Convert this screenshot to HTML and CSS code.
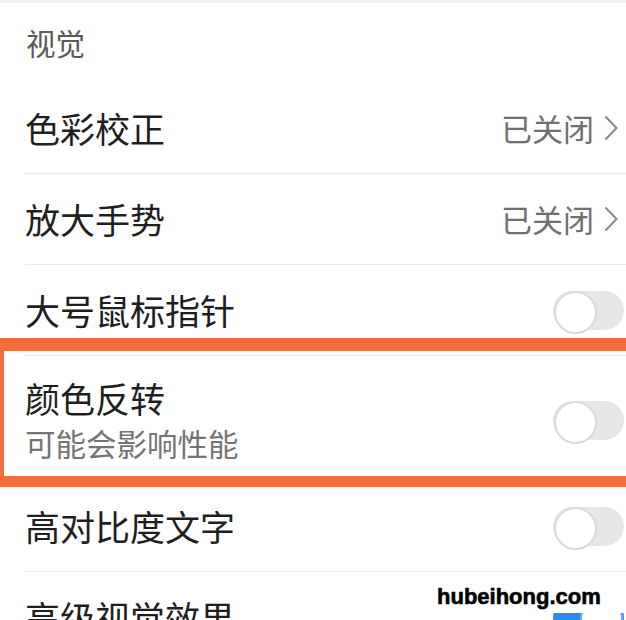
FILE: index.html
```html
<!DOCTYPE html>
<html>

<head>
    <meta charset="utf-8" />
    <title>辅助功能</title>
    <link rel="stylesheet" href="styles.css">
</head>

<body>
    <div class="page">
        <div class="strip"></div>
        <div class="group-title">视觉</div>
        <div class="list">
            <div class="row">
                <span class="label">色彩校正</span>
                <span class="value">已关闭
                    <svg class="chevron" width="14" height="26" viewBox="0 0 14 26">
                        <polyline points="1.5,1.5 12.5,13 1.5,24.5" />
                    </svg>
                </span>
            </div>
            <div class="row">
                <span class="label">放大手势</span>
                <span class="value">已关闭
                    <svg class="chevron" width="14" height="26" viewBox="0 0 14 26">
                        <polyline points="1.5,1.5 12.5,13 1.5,24.5" />
                    </svg>
                </span>
            </div>
            <div class="row">
                <span class="label">大号鼠标指针</span>
                <span class="switch"></span>
            </div>
            <div class="row tall">
                <div class="texts">
                    <span class="label">颜色反转</span>
                    <span class="hint">可能会影响性能</span>
                </div>
                <span class="switch"></span>
            </div>
            <div class="row">
                <span class="label">高对比度文字</span>
                <span class="switch"></span>
            </div>
            <div class="row">
                <span class="label">高级视觉效果</span>
                <span class="switch on"></span>
            </div>
        </div>
        <div class="highlight"></div>
        <div class="watermark">hubeihong.com</div>
    </div>
</body>

</html>
```

FILE: styles.css
```css
* {
    box-sizing: border-box;
}

html,
body {
    margin: 0;
    background-color: #fff;
}

.page {
    position: relative;
    width: 626px;
    height: 620px;
    overflow: hidden;
    font-family: "Noto Sans CJK SC", "Noto Sans", sans-serif;
}

.strip {
    height: 3px;
    background-color: #f1f1f1;
}

.group-title {
    height: 80px;
    padding: 21px 0 0 26px;
    font-size: 29.5px;
    line-height: 36px;
    color: #5a5a5a;
}

.list {
    padding-left: 25px;
}

.row {
    display: flex;
    align-items: center;
    justify-content: space-between;
    height: 91px;
    padding-right: 2px;
    border-bottom: 1px solid #ebebeb;
}

.row.tall {
    height: 125px;
    padding-top: 4px;
}

.label {
    font-size: 35px;
    line-height: 40px;
    color: #1e1e1e;
}

.texts {
    display: flex;
    flex-direction: column;
    gap: 5px;
}

.hint {
    font-size: 30.5px;
    line-height: 40px;
    color: #747474;
}

.value {
    display: flex;
    align-items: center;
    gap: 10px;
    padding-right: 6px;
    font-size: 31px;
    line-height: 40px;
    color: #6f6f6f;
}

.chevron polyline {
    fill: none;
    stroke: #8a8a8a;
    stroke-width: 2;
}

.switch {
    position: relative;
    width: 71px;
    height: 39px;
    border-radius: 20px;
    background-color: #e6e6e6;
}

.switch::after {
    content: "";
    position: absolute;
    left: 1px;
    top: 0;
    width: 39px;
    height: 39px;
    border-radius: 50%;
    border: 2px solid #dadada;
    background-color: #fff;
}

.switch.on {
    background-color: #2a8cec;
}

.switch.on::after {
    left: auto;
    right: 1px;
    border-color: #6fb5f5;
}

.highlight {
    position: absolute;
    left: 0;
    right: -20px;
    top: 338px;
    height: 149px;
    border: solid #f56d3d;
    border-width: 13px 0 11px 4px;
}

.watermark {
    position: absolute;
    left: 430px;
    right: 0;
    top: 583px;
    height: 30px;
    padding: 0 7px;
    background-color: #fff;
    font-family: "Liberation Sans", Arial, sans-serif;
    font-weight: bold;
    font-size: 22px;
    line-height: 28px;
    color: #000;
    -webkit-text-stroke: 0.6px #000;
}
```
